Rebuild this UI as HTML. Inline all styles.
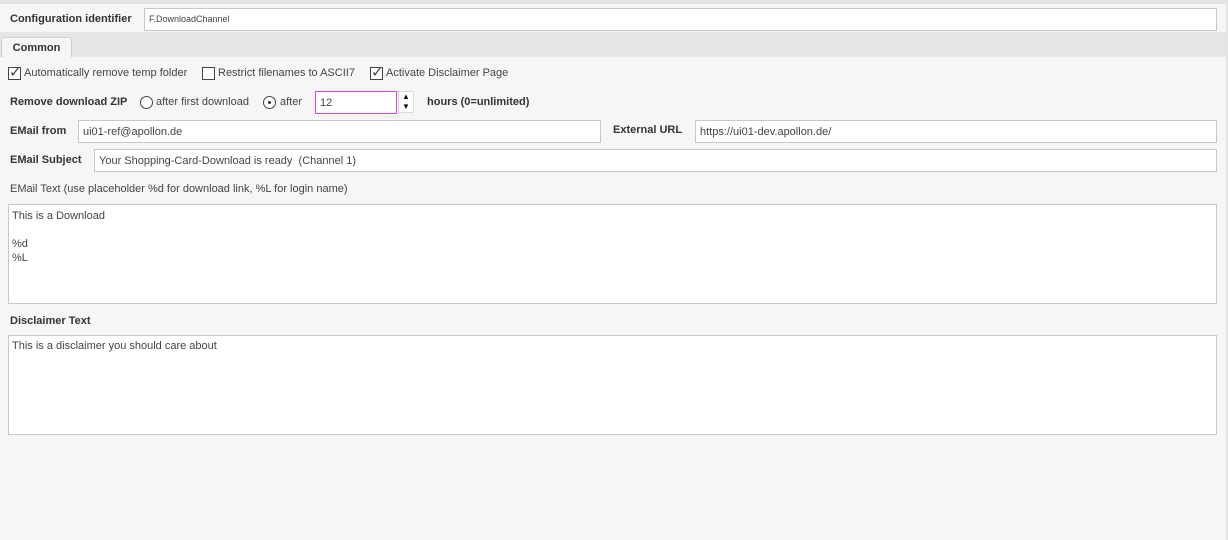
<!DOCTYPE html>
<html><head><style>
body{margin:0;width:1228px;height:540px;background:#f6f6f6;font-family:"Liberation Sans",Arial,sans-serif;font-size:11px;color:#444;position:relative;overflow:hidden}
.a{position:absolute}
.in{position:absolute;background:#fff;border:1px solid #c8c8c8;box-sizing:border-box;padding:4px 4px;font-size:11px;color:#444}
.b{font-weight:bold;color:#333}
.cb{position:absolute;width:13px;height:13px;border:1px solid #444;background:#fff;box-sizing:border-box}
.rd{position:absolute;width:13px;height:13px;border:1px solid #444;border-radius:50%;background:#fff;box-sizing:border-box}
</style></head><body>
<div class="a" style="left:0;top:0;width:1228px;height:4px;background:#e4e4e4"></div>
<div class="a b" style="left:10px;top:13px">Configuration identifier</div>
<div class="in" style="left:144px;top:8px;width:1073px;height:23px;font-size:9px;padding-top:5px">F.DownloadChannel</div>
<div class="a" style="left:0;top:32px;width:1228px;height:25px;background:#e6e6e6"></div>
<div class="a b" style="left:1px;top:37px;width:71px;height:20px;background:#f6f6f6;border:1px solid #d0d0d0;border-bottom:none;border-radius:3px 3px 0 0;box-sizing:border-box;text-align:center;line-height:20px">Common</div>

<div class="cb" style="left:8px;top:67px"></div><div class="a" style="left:9px;top:63px;font-size:15px">✓</div>
<div class="a" style="left:24px;top:67px">Automatically remove temp folder</div>
<div class="cb" style="left:202px;top:67px"></div>
<div class="a" style="left:218px;top:67px">Restrict filenames to ASCII7</div>
<div class="cb" style="left:370px;top:67px"></div><div class="a" style="left:371px;top:63px;font-size:15px">✓</div>
<div class="a" style="left:386px;top:67px">Activate Disclaimer Page</div>

<div class="a b" style="left:10px;top:96px">Remove download ZIP</div>
<div class="rd" style="left:140px;top:96px"></div>
<div class="a" style="left:156px;top:96px">after first download</div>
<div class="rd" style="left:263px;top:96px"></div><div class="a" style="left:268px;top:101px;width:3px;height:3px;background:#333;border-radius:50%"></div>
<div class="a" style="left:280px;top:96px">after</div>
<div class="in" style="left:315px;top:91px;width:82px;height:23px;border-color:#e040e0;padding-top:5px">12</div>
<div class="a" style="left:398px;top:91px;width:16px;height:22px;background:#fff;border:1px solid #ddd;box-sizing:border-box;font-size:8px;line-height:10px;text-align:center;color:#111">▲<br>▼</div>
<div class="a b" style="left:427px;top:96px">hours (0=unlimited)</div>

<div class="a b" style="left:10px;top:125px">EMail from</div>
<div class="in" style="left:78px;top:120px;width:523px;height:23px;padding-top:5px">ui01-ref@apollon.de</div>
<div class="a b" style="left:613px;top:124px">External URL</div>
<div class="in" style="left:695px;top:120px;width:522px;height:23px;padding-top:5px">https://ui01-dev.apollon.de/</div>

<div class="a b" style="left:10px;top:154px">EMail Subject</div>
<div class="in" style="left:94px;top:149px;width:1123px;height:23px;padding-top:5px">Your Shopping-Card-Download is ready &nbsp;(Channel 1)</div>

<div class="a" style="left:10px;top:183px">EMail Text (use placeholder %d for download link, %L for login name)</div>
<div class="in" style="left:8px;top:204px;width:1209px;height:100px;line-height:14px;padding-left:3px">This is a Download<br><br>%d<br>%L</div>

<div class="a b" style="left:10px;top:315px">Disclaimer Text</div>
<div class="in" style="left:8px;top:335px;width:1209px;height:100px;padding-left:3px">This is a disclaimer you should care about</div>
<div class="a" style="left:1226px;top:0;width:2px;height:540px;background:#e4e4e4"></div>
</body></html>
